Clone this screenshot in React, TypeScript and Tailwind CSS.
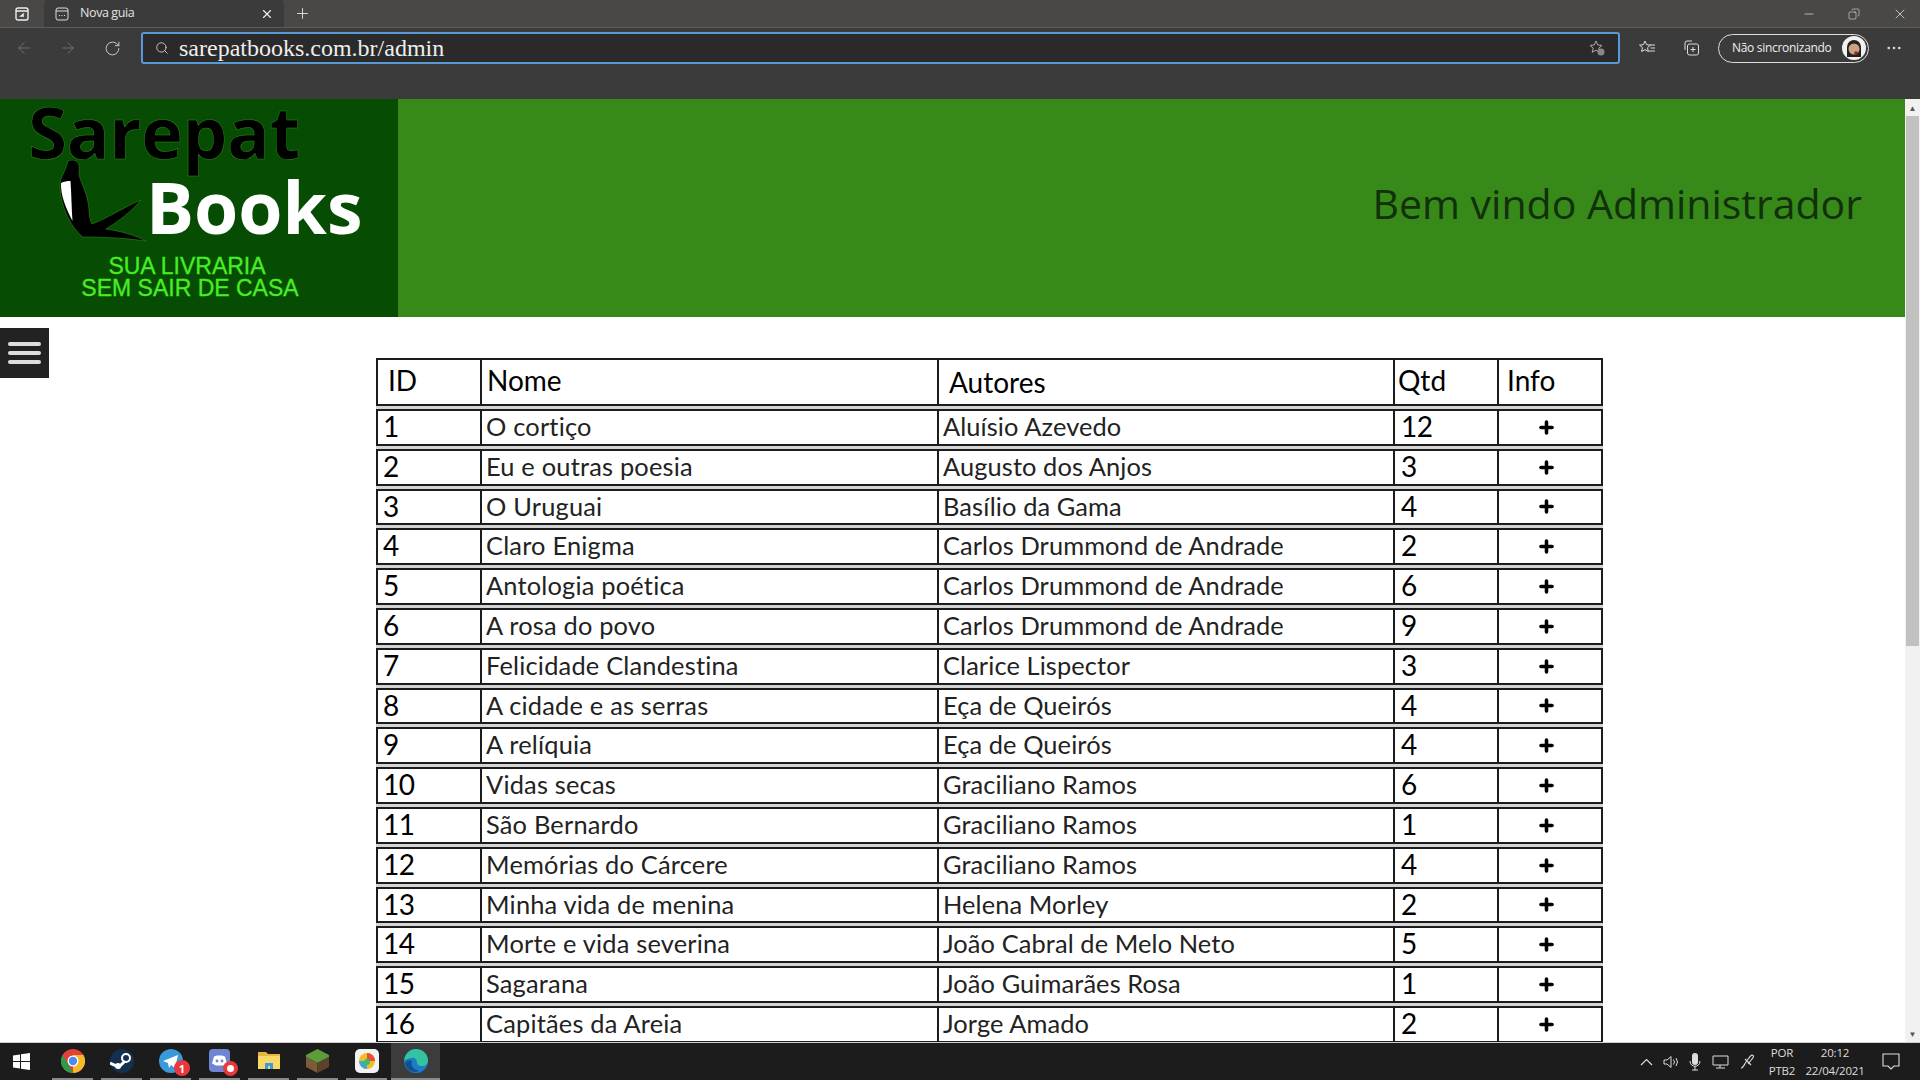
import type { ReactNode } from "react";
import { ArrowLeft, ArrowRight, Copy, Minus, MoreHorizontal, Plus, RotateCw, Search, X } from "lucide-react";

const rows = [
  ["1", "O cortiço", "Aluísio Azevedo", "12"],
  ["2", "Eu e outras poesia", "Augusto dos Anjos", "3"],
  ["3", "O Uruguai", "Basílio da Gama", "4"],
  ["4", "Claro Enigma", "Carlos Drummond de Andrade", "2"],
  ["5", "Antologia poética", "Carlos Drummond de Andrade", "6"],
  ["6", "A rosa do povo", "Carlos Drummond de Andrade", "9"],
  ["7", "Felicidade Clandestina", "Clarice Lispector", "3"],
  ["8", "A cidade e as serras", "Eça de Queirós", "4"],
  ["9", "A relíquia", "Eça de Queirós", "4"],
  ["10", "Vidas secas", "Graciliano Ramos", "6"],
  ["11", "São Bernardo", "Graciliano Ramos", "1"],
  ["12", "Memórias do Cárcere", "Graciliano Ramos", "4"],
  ["13", "Minha vida de menina", "Helena Morley", "2"],
  ["14", "Morte e vida severina", "João Cabral de Melo Neto", "5"],
  ["15", "Sagarana", "João Guimarães Rosa", "1"],
  ["16", "Capitães da Areia", "Jorge Amado", "2"],
];

const gridCols = "grid grid-cols-[102px_457px_456px_104px_108px]";

function BrowserChrome() {
  return (
    <div className="h-[99px] shrink-0 bg-[#3b3b3b] text-white font-['Open_Sans',sans-serif]">
      <div className="flex h-[28px] items-stretch bg-[#4a4846] border-b border-[#5c5c5c]">
        <div className="w-[44px] flex items-center justify-center">
          <svg width="14" height="14" viewBox="0 0 14 14" fill="none" stroke="#eee" strokeWidth="1.4">
            <rect x="1" y="1" width="12" height="12" rx="2" />
            <path d="M1 4h12M9 6.5L6 9h3" />
          </svg>
        </div>
        <div className="w-[240px] bg-[#3b3b3b] flex items-center pl-[11px] pr-[10px] gap-[11px] rounded-t-sm">
          <svg width="14" height="14" viewBox="0 0 14 14" fill="none" stroke="#ddd" strokeWidth="1">
            <rect x="1" y="1" width="12" height="12" rx="2" />
            <path d="M1 4h12M4 8.500h1M6.500 8.500h1M9 8.500h1" />
          </svg>
          <span className="flex-1 text-[12.500px] tracking-[-0.4px] text-[#e4e4e4]">Nova guia</span>
          <X size={14} className="text-[#eee]" />
        </div>
        <div className="flex w-[36px] items-center justify-center">
          <Plus size={17} strokeWidth={1.2} className="text-[#eee]" />
        </div>
        <div className="flex-1" />
        <div className="flex items-center gap-[32px] pr-[12px]">
          <Minus size={14} strokeWidth={1} />
          <Copy size={12} strokeWidth={1} className="-scale-x-100" />
          <X size={16} strokeWidth={1} />
        </div>
      </div>
      <div className="flex h-[40px] items-center pl-[15px] pr-[14px]">
        <ArrowLeft size={18} strokeWidth={1.2} className="text-[#777]" />
        <ArrowRight size={18} strokeWidth={1.2} className="ml-[26px] text-[#777]" />
        <RotateCw size={17} strokeWidth={1.2} className="ml-[27px] text-[#ddd]" />
        <div className="ml-[20px] flex h-[32px] w-[1479px] items-center rounded-[3px] border-2 border-[#5a9ad2] bg-[#2a2a2a] pl-[12px] pr-[12px]">
          <Search size={14} strokeWidth={1.6} className="text-[#ccc]" />
          <span className="ml-[10px] flex-1 font-['Liberation_Serif',serif] text-[24px] leading-none text-[#eee]">sarepatbooks.com.br/admin</span>
          <svg width="18" height="18" viewBox="0 0 18 18" fill="none" stroke="#aaa" strokeWidth="1">
            <path d="M8 2l1.8 4 4.2.4-3.2 2.8 1 4.1L8 11.2 4.2 13.300l1-4.100L2 6.400 6.200 6z" />
            <circle cx="13" cy="13" r="3.500" fill="#888" stroke="none" />
          </svg>
        </div>
        <svg className="ml-[18px]" width="18" height="18" viewBox="0 0 18 18" fill="none" stroke="#ddd" strokeWidth="1">
          <path d="M7 2l1.600 3.700 3.900.4-3 2.600.9 3.900L7 10.600l-3.400 2 .9-3.900-3-2.600 3.900-.4zM12 6h5M12.500 9h4.500M11 12h6" />
        </svg>
        <svg className="ml-[26px]" width="18" height="18" viewBox="0 0 18 18" fill="none" stroke="#ddd" strokeWidth="1">
          <path d="M3 11V4a2 2 0 0 1 2-2h5" />
          <rect x="5.500" y="5" width="11" height="11" rx="2" />
          <path d="M11 8v5M8.500 10.500h5" />
        </svg>
        <div className="ml-[18px] flex h-[29px] w-[151px] items-center justify-between rounded-full border border-[#ddd] pl-[13px] pr-[2px]">
          <span className="whitespace-nowrap text-[12px] tracking-[-0.3px] text-[#eee]">Não sincronizando</span>
          <svg width="24" height="24" viewBox="0 0 24 24">
            <circle cx="12" cy="12" r="12" fill="#f2f2f2" />
            <path d="M5 21V11a7 7 0 0 1 14 0v10z" fill="#222" />
            <circle cx="12" cy="13" r="5.500" fill="#c9a184" />
            <circle cx="14" cy="17" r="1.800" fill="#b01818" />
          </svg>
        </div>
        <MoreHorizontal size={18} strokeWidth={1.5} className="ml-[16px] text-[#ddd]" />
      </div>
    </div>
  );
}

function Logo() {
  return (
    <div className="w-[398px] shrink-0 bg-[#064c02] font-['Open_Sans',sans-serif]">
      <div className="ml-[28px] h-[78px] text-[71px] leading-[66px] font-bold tracking-[-0.4px] text-black [-webkit-text-stroke:0.5px_#2f8a1a]">Sarepat</div>
      <div className="flex h-[78px] items-start">
        <svg className="ml-[58px] mt-[-17px] shrink-0" width="92" height="84" viewBox="0 0 92 84">
          <path d="M10 1c4-2 10-1 11 4 1 4-1 8 1 13 3 9 8 18 9 31 0 5 1 11 3 15 14-5 34-18 49-24-9 11-22 21-35 29 14 2 29 6 40 12-20-3-42-4-63-4C15 70 2 48 2 25c0-8 5-12 8-24z" fill="#000" stroke="#2f8a1a" strokeWidth="0.6" />
          <path d="M3 23c3-1.500 6-2 9.500-2 1 14 1 28 2 40C8 48 2.500 36 3 23z" fill="#fff" />
        </svg>
        <span className="ml-[-4px] mt-[-14px] text-[71.500px] leading-[88px] font-bold text-white">Books</span>
      </div>
      <div className="mt-[0px] text-center font-['Liberation_Sans',sans-serif] text-[23px] leading-[22px] text-[#47ee25] [-webkit-text-stroke:0.3px_#47ee25]">
        <div className="pr-[24px]">SUA LIVRARIA</div>
        <div className="whitespace-nowrap pr-[18px]">SEM SAIR DE CASA</div>
      </div>
    </div>
  );
}

function BookTable() {
  return (
    <div className="w-[1227px] bg-[#d4d4d4] font-['Lato',sans-serif] text-[#222]">
      <div className={`${gridCols} h-[48px] border-2 border-[#1c1c1c] bg-white text-[28px] leading-[41px] text-black`}>
        <div className="pl-[10px]">ID</div>
        <div className="border-l-2 border-[#1c1c1c] pl-[5px]">Nome</div>
        <div className="border-l-2 border-[#1c1c1c] pl-[10px] pt-[2px]">Autores</div>
        <div className="border-l-2 border-[#1c1c1c] pl-[3px]">Qtd</div>
        <div className="border-l-2 border-[#1c1c1c] pl-[8px]">Info</div>
      </div>
      <div className="mt-[3px] flex flex-col gap-[3px]">
        {rows.map(([id, name, author, qty]) => (
          <div key={id} className={`${gridCols} h-[36.800px] border-2 border-[#1c1c1c] bg-white text-[25.400px] leading-[31px]`}>
            <div className="pl-[5px] text-[28px] tracking-[-0.5px] text-black">{id}</div>
            <div className="border-l-2 border-[#1c1c1c] pl-[4px] tracking-[0.2px]">{name}</div>
            <div className="border-l-2 border-[#1c1c1c] pl-[4px] tracking-[0.1px]">{author}</div>
            <div className="border-l-2 border-[#1c1c1c] pl-[6px] text-[28px] tracking-[-0.5px] text-black">{qty}</div>
            <div className="flex items-center justify-center border-l-2 border-[#1c1c1c] pr-[11px]">
              <Plus size={19} strokeWidth={4.500} className="text-black" />
            </div>
          </div>
        ))}
      </div>
    </div>
  );
}

function Scrollbar() {
  return (
    <div className="flex w-[15px] shrink-0 flex-col bg-[#f1f1f1]">
      <div className="flex h-[17px] items-center justify-center text-[8px] leading-none text-[#555]">▲</div>
      <div className="ml-[1px] h-[530px] w-[13px] bg-[#c1c1c1]" />
      <div className="flex-1" />
      <div className="flex h-[17px] items-center justify-center text-[8px] leading-none text-[#555]">▼</div>
    </div>
  );
}

function TaskApp({ active, children }: { active?: boolean; children: ReactNode }) {
  return (
    <div className={active ? "flex w-[49px] items-center justify-center border-b-2 border-[#8a8a8a] bg-[#3c3c3c]" : "mx-[4px] relative flex w-[41px] items-center justify-center border-b-2 border-[#8a8a8a]"}>
      {children}
    </div>
  );
}

function Taskbar() {
  return (
    <div className="z-10 flex h-[38px] shrink-0 items-stretch border-t border-[#cfcfcf] bg-[#1c1c1c] font-['Open_Sans',sans-serif] text-white">
      <div className="flex w-[48px] items-center justify-center pr-[6px]">
        <svg width="17" height="17" viewBox="0 0 17 17" fill="#fff">
          <path d="M0 2.500l7-1v6.500H0zM8 1.300L17 0v8H8zM0 9h7v6.500l-7-1zM8 9h9v8l-9-1.300z" />
        </svg>
      </div>
      <TaskApp>
        <svg width="24" height="24" viewBox="0 0 24 24">
          <circle cx="12" cy="12" r="12" fill="#dd4437" />
          <path d="M12 24a12 12 0 0 0 10.400-18H12z" fill="#f3bb2c" />
          <path d="M1.600 6 7 15l5 9A12 12 0 0 1 1.600 6z" fill="#2a9c4a" />
          <circle cx="12" cy="12" r="5.500" fill="#fff" />
          <circle cx="12" cy="12" r="4.200" fill="#4a8bf0" />
        </svg>
      </TaskApp>
      <TaskApp>
        <svg width="24" height="24" viewBox="0 0 24 24">
          <circle cx="12" cy="12" r="12" fill="#14304e" />
          <path d="M0 14l9 4 6-6" stroke="#fff" strokeWidth="3" fill="none" />
          <circle cx="16" cy="9" r="4" fill="none" stroke="#fff" strokeWidth="2" />
          <circle cx="8" cy="17" r="3" fill="#fff" />
        </svg>
      </TaskApp>
      <TaskApp>
        <svg width="24" height="24" viewBox="0 0 24 24">
          <circle cx="12" cy="12" r="12" fill="#3a9ad9" />
          <path d="M4 12 19 6l-3 13-4-3-2 3-1-5z" fill="#fff" />
        </svg>
        <span className="absolute bottom-[2px] right-[1px] flex h-[16px] w-[16px] items-center justify-center rounded-full bg-[#e8383a] text-[11px] font-bold leading-none">1</span>
      </TaskApp>
      <TaskApp>
        <div className="flex h-[23px] w-[21px] items-center justify-center rounded-[4px] bg-[#6f84d2]">
          <svg width="15" height="11" viewBox="0 0 15 11">
            <path d="M2 1.500 5 .5h5l3 1 2 7-4 2H4L0 8.500z" fill="#fff" />
            <circle cx="5" cy="6" r="1.400" fill="#6f84d2" />
            <circle cx="10" cy="6" r="1.400" fill="#6f84d2" />
          </svg>
        </div>
        <span className="absolute bottom-[2px] right-[2px] flex h-[15px] w-[15px] items-center justify-center rounded-full bg-[#e8383a]">
          <span className="h-[7px] w-[7px] rounded-full bg-white" />
        </span>
      </TaskApp>
      <TaskApp>
        <svg width="22" height="19" viewBox="0 0 22 19">
          <path d="M0 1h8l2 2h12v15H0z" fill="#e8b63c" />
          <path d="M0 5h22v13H0z" fill="#f9d866" />
          <path d="M7 12h8v6H7z" fill="#3b9de0" />
          <path d="M10 15h2v3h-2z" fill="#f9d866" />
        </svg>
      </TaskApp>
      <TaskApp>
        <svg width="23" height="24" viewBox="0 0 23 24">
          <path d="M11.500 0 23 6v2l-11.500 6L0 8V6z" fill="#5d9c3a" />
          <path d="M0 8l11.500 6v10L0 18z" fill="#7c5a3a" />
          <path d="M23 8l-11.500 6v10L23 18z" fill="#5b422b" />
        </svg>
      </TaskApp>
      <TaskApp>
        <div className="flex h-[24px] w-[24px] items-center justify-center rounded-[5px] bg-[#f2f2f2]">
          <svg width="16" height="16" viewBox="0 0 16 16">
            <circle cx="8" cy="8" r="8" fill="#f0c020" />
            <path d="M8 0a8 8 0 0 1 8 8H8z" fill="#e74c3c" />
            <path d="M0 8a8 8 0 0 0 8 8V8z" fill="#38a8d8" />
            <circle cx="8" cy="9" r="3" fill="#3dbb6a" />
          </svg>
        </div>
      </TaskApp>
      <TaskApp active>
        <svg width="24" height="24" viewBox="0 0 24 24">
          <circle cx="12" cy="12" r="12" fill="#1b7fc7" />
          <path d="M0 11C2 3 7 0 12 0c7 0 12 5 12 12 0 3-3 5-6 5-4 0-5-2-5-4 0-3-3-5-6-4-3 .5-6 2-7 2z" fill="#35c2a0" />
          <path d="M8 12c-2 5 2 9 7 10-6 3-13-1-14-8 1-2 4-4 7-2z" fill="#14508f" />
        </svg>
      </TaskApp>
      <div className="flex-1" />
      <div className="flex items-center text-[#ddd]">
        <svg width="13" height="8" viewBox="0 0 13 8" fill="none" stroke="#ddd" strokeWidth="1.2"><path d="M1 7l5.500-5.500L12 7" /></svg>
        <svg className="ml-[10px]" width="16" height="14" viewBox="0 0 16 14" fill="none" stroke="#ddd" strokeWidth="1"><path d="M1 5h3l4-3.500v11L4 9H1zM10.500 4.500q2 2.500 0 5M13 3q3 4 0 8" /></svg>
        <svg className="ml-[10px]" width="12" height="18" viewBox="0 0 12 18" fill="#ddd"><rect x="3" y="0" width="6" height="12" rx="3" /><path d="M1 8c0 7 10 7 10 0M6 13v4M3 17h6" fill="none" stroke="#ddd" /></svg>
        <svg className="ml-[11px]" width="17" height="15" viewBox="0 0 17 15" fill="none" stroke="#ddd" strokeWidth="1"><path d="M1 2h15v9H1zM8 11v3M4 14h9" /></svg>
        <svg className="ml-[10px]" width="17" height="17" viewBox="0 0 17 17" fill="none" stroke="#ddd" strokeWidth="1.1"><path d="M2 15c2 0 3-3 5-6s4-6 6-7c2 0 2 2 0 4l-4 5M6 6l6 6" /></svg>
        <div className="ml-[11px] w-[30px] text-center text-[11.500px] leading-[18px] tracking-[-0.2px]">
          <div>POR</div>
          <div>PTB2</div>
        </div>
        <div className="ml-[7px] w-[62px] text-center text-[11.500px] leading-[18px] tracking-[-0.2px]">
          <div>20:12</div>
          <div className="whitespace-nowrap">22/04/2021</div>
        </div>
        <svg className="ml-[16px] mr-[20px]" width="18" height="17" viewBox="0 0 18 17" fill="none" stroke="#ddd" strokeWidth="1.1"><path d="M1 1h16v12h-5l-3 3-3-3H1z" /></svg>
      </div>
    </div>
  );
}

export default function App() {
  return (
    <div className="flex h-screen w-[1920px] flex-col overflow-hidden bg-white">
      <BrowserChrome />
      <div className="flex min-h-0 flex-1">
        <div className="min-w-0 flex-1 overflow-hidden">
          <header className="flex h-[218px] bg-[#378a1a]">
            <Logo />
            <div className="flex flex-1 justify-end pr-[43px] pt-[76px] font-['Open_Sans',sans-serif] text-[41px] leading-[56px] text-[#12300a]">
              Bem vindo Administrador
            </div>
          </header>
          <div className="flex">
            <div className="mt-[11px] flex h-[50px] w-[49px] flex-col items-center justify-center gap-[5px] bg-[#222]">
              <span className="h-[4px] w-[33px] rounded-full bg-[#ddd]" />
              <span className="h-[4px] w-[33px] rounded-full bg-[#ddd]" />
              <span className="h-[4px] w-[33px] rounded-full bg-[#ddd]" />
            </div>
            <div className="ml-[327px] mt-[41px]">
              <BookTable />
            </div>
          </div>
        </div>
        <Scrollbar />
      </div>
      <Taskbar />
    </div>
  );
}
